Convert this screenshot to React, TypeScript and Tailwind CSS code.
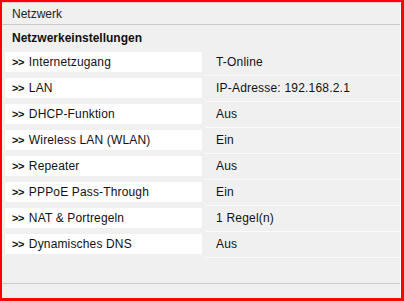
import React from "react";

const rows: [string, string][] = [
  ["Internetzugang", "T-Online"],
  ["LAN", "IP-Adresse: 192.168.2.1"],
  ["DHCP-Funktion", "Aus"],
  ["Wireless LAN (WLAN)", "Ein"],
  ["Repeater", "Aus"],
  ["PPPoE Pass-Through", "Ein"],
  ["NAT & Portregeln", "1 Regel(n)"],
  ["Dynamisches DNS", "Aus"],
];

export default function App() {
  return (
    <div className="w-[404px] h-[301px] border-t-2 border-l-2 border-r-[3px] border-b-[3px] border-[#ff0000] bg-[#f0f0f0] flex flex-col font-['Liberation_Sans',Arial,sans-serif] text-[12px] text-[#111] leading-none overflow-hidden">
      <div className="flex-1 flex flex-col border-r border-white">
        <div className="h-[23px] shrink-0 border-t border-[#f3c6da] border-b border-b-[#c8c8c8] flex items-center pl-[10px]">
          <span className="text-[#222]">Netzwerk</span>
        </div>
        <div className="h-[26px] shrink-0 flex items-center pl-[10px] font-bold text-[#111]">
          Netzwerkeinstellungen
        </div>
        <div className="flex flex-col">
          {rows.map(([label, value]) => (
            <div key={label} className="h-[26px] flex">
              <div className="w-[200px] pl-[3px] pt-[1px]">
                <div className="h-[20px] w-[197px] bg-white flex items-center pl-[7px]">
                  <span className="font-bold text-[11px] tracking-[-0.5px] mr-[5px]">&gt;&gt;</span>
                  <span className="tracking-[0.15px]">{label}</span>
                </div>
              </div>
              <div className="flex-1 ml-[3px] border-b border-[#fbfbfb] h-[25px]">
                <div className="h-[21px] flex items-center pl-[11px] tracking-[0.2px]">{value}</div>
              </div>
            </div>
          ))}
        </div>
        <div className="flex-1" />
        <div className="h-[15px] shrink-0 border-t border-[#c8c8c8] border-b border-b-[#e6eef8]" />
      </div>
    </div>
  );
}
